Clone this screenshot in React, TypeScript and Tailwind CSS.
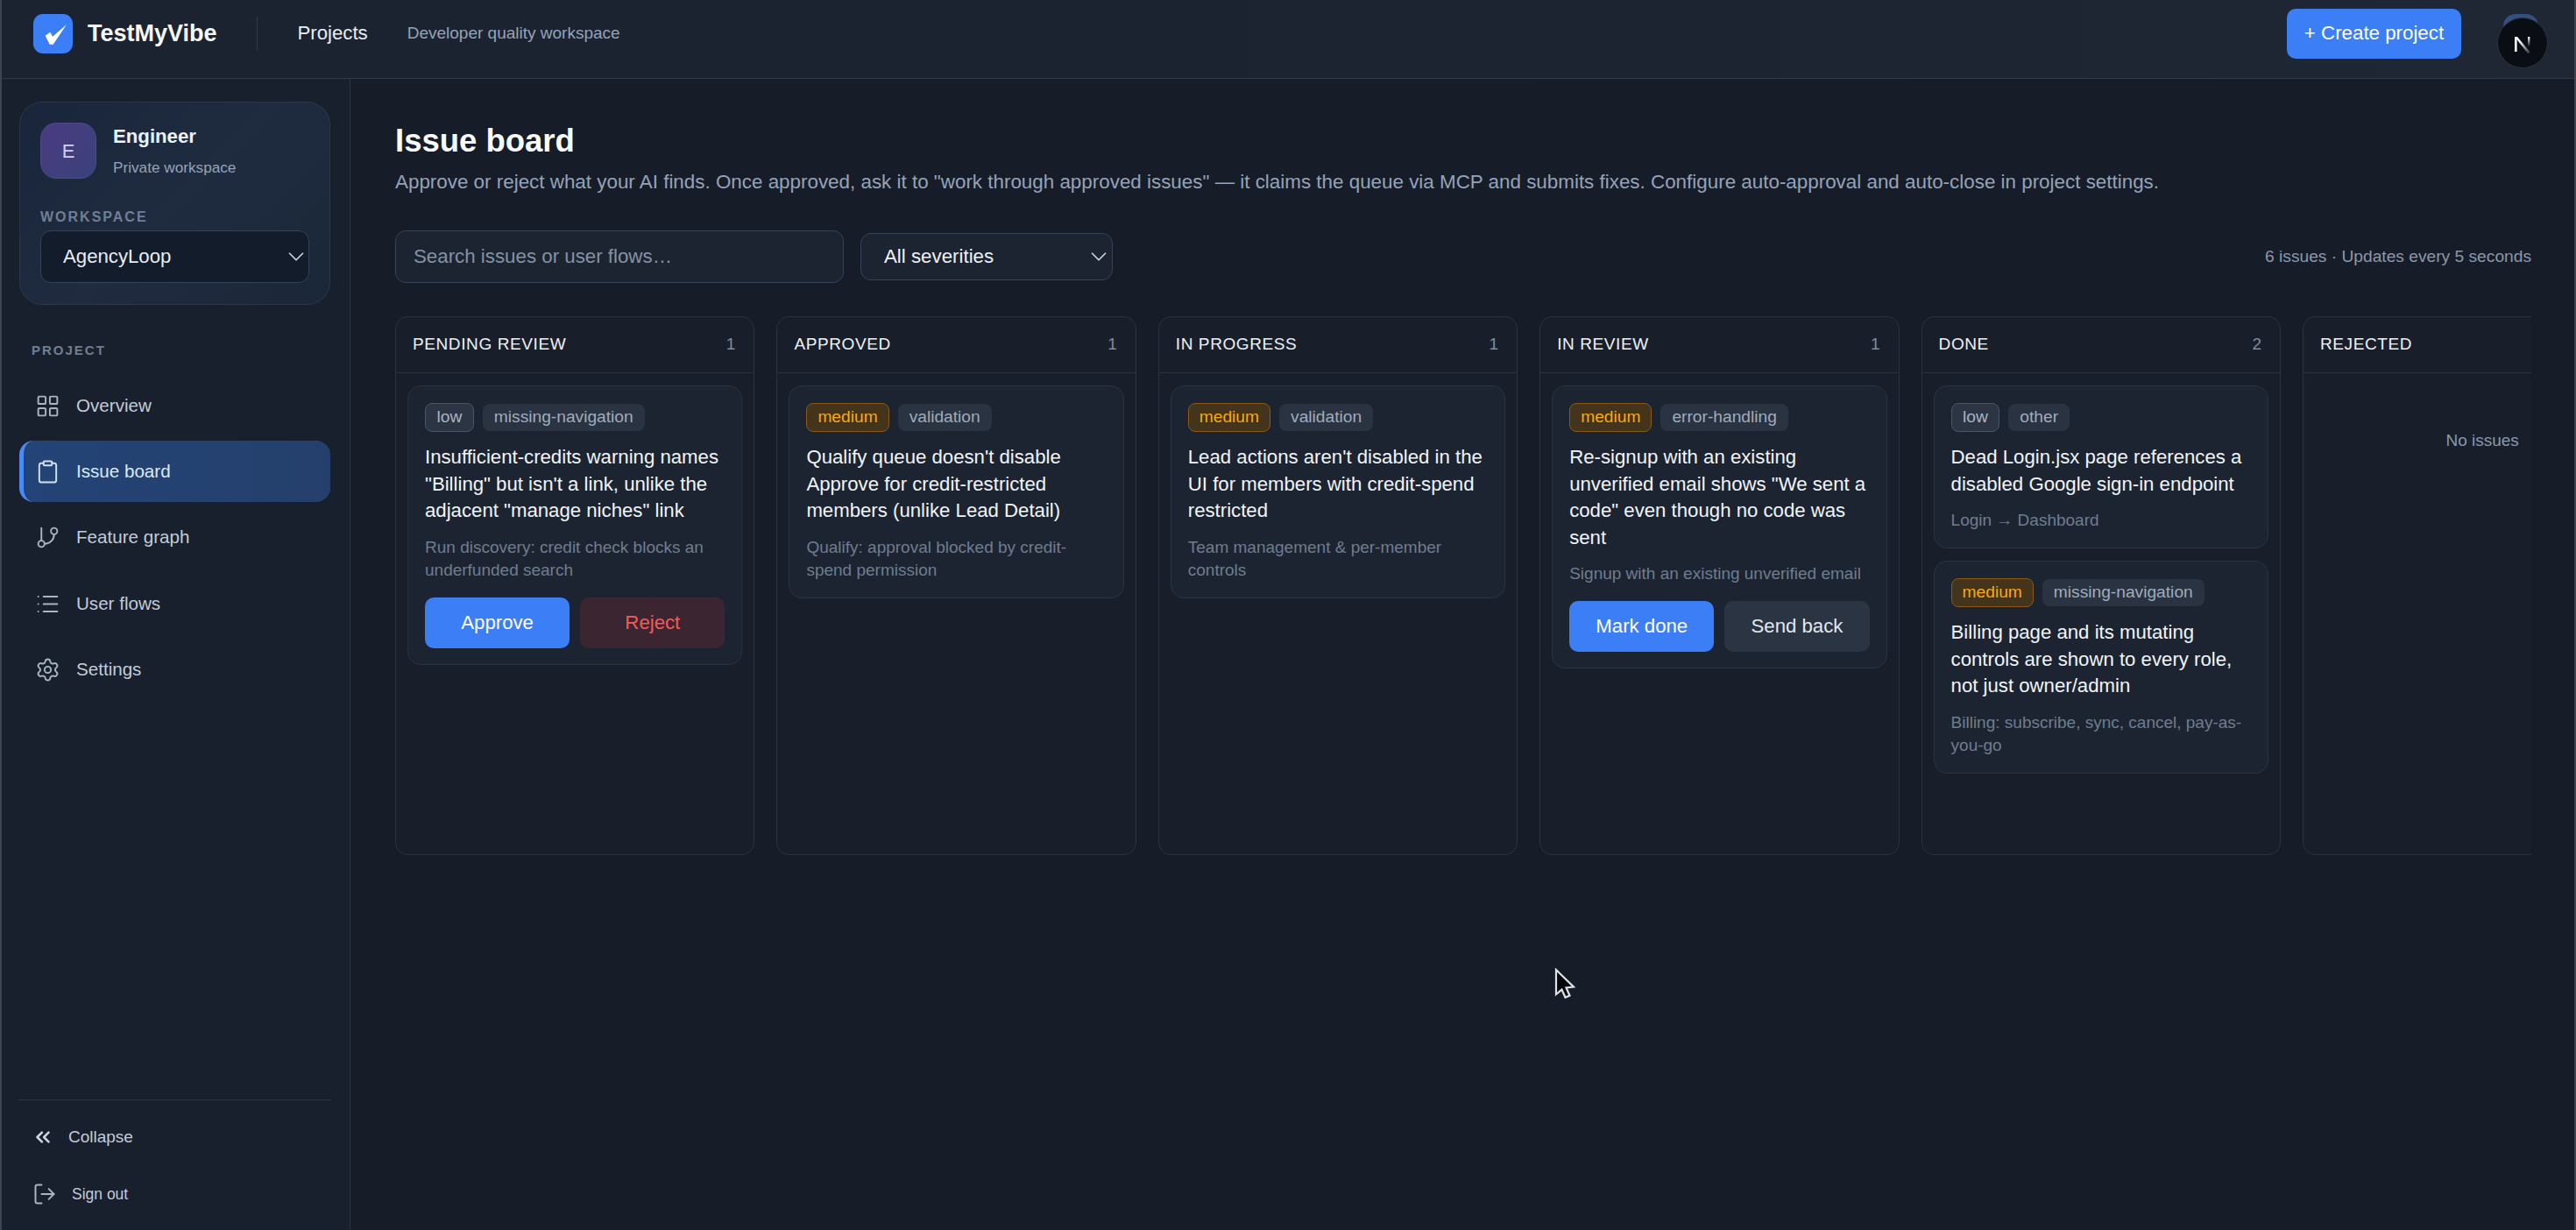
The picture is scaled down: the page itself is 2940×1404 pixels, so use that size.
import { ChevronDown, ChevronsLeft, Clipboard, GitBranch, LayoutGrid, List, LogOut, Settings } from "lucide-react";

type Action = { label: string; style: string };
type Issue = {
  severity: "low" | "medium";
  tag: string;
  title: string;
  flow: string;
  actions?: Action[];
};
type Column = { name: string; issues: Issue[] };

const primaryBtn = "bg-[#3b7ef6] text-white";

const columns: Column[] = [
  {
    name: "Pending review",
    issues: [
      {
        severity: "low",
        tag: "missing-navigation",
        title: 'Insufficient-credits warning names "Billing" but isn\'t a link, unlike the adjacent "manage niches" link',
        flow: "Run discovery: credit check blocks an underfunded search",
        actions: [
          { label: "Approve", style: primaryBtn },
          { label: "Reject", style: "bg-[#3a2530] text-[#f55a5a]" },
        ],
      },
    ],
  },
  {
    name: "Approved",
    issues: [
      {
        severity: "medium",
        tag: "validation",
        title: "Qualify queue doesn't disable Approve for credit-restricted members (unlike Lead Detail)",
        flow: "Qualify: approval blocked by credit-spend permission",
      },
    ],
  },
  {
    name: "In progress",
    issues: [
      {
        severity: "medium",
        tag: "validation",
        title: "Lead actions aren't disabled in the UI for members with credit-spend restricted",
        flow: "Team management & per-member controls",
      },
    ],
  },
  {
    name: "In review",
    issues: [
      {
        severity: "medium",
        tag: "error-handling",
        title: 'Re-signup with an existing unverified email shows "We sent a code" even though no code was sent',
        flow: "Signup with an existing unverified email",
        actions: [
          { label: "Mark done", style: primaryBtn },
          { label: "Send back", style: "bg-[#2a3443] text-[#e2e8f0]" },
        ],
      },
    ],
  },
  {
    name: "Done",
    issues: [
      {
        severity: "low",
        tag: "other",
        title: "Dead Login.jsx page references a disabled Google sign-in endpoint",
        flow: "Login → Dashboard",
      },
      {
        severity: "medium",
        tag: "missing-navigation",
        title: "Billing page and its mutating controls are shown to every role, not just owner/admin",
        flow: "Billing: subscribe, sync, cancel, pay-as-you-go",
      },
    ],
  },
  { name: "Rejected", issues: [] },
];

const navItems = [
  { label: "Overview", icon: LayoutGrid },
  { label: "Issue board", icon: Clipboard, active: true },
  { label: "Feature graph", icon: GitBranch },
  { label: "User flows", icon: List },
  { label: "Settings", icon: Settings },
];

function IssueCard({ issue }: { issue: Issue }) {
  return (
    <div className="rounded-[15px] border border-[#2a3341] bg-[#1c2431] px-[19px] pb-[18px] pt-[19px]">
      <div className="flex h-[33px] items-center gap-[10px]">
        {issue.severity === "low" ? (
          <span className="flex h-[33px] items-center rounded-[8px] border border-[#4a5566] bg-[#2c3544] px-[12.5px] text-[19.2px] text-[#a9b4c3]">
            low
          </span>
        ) : (
          <span className="flex h-[33px] items-center rounded-[8px] border border-[#8a5a14] bg-[#45341c] px-[12px] text-[19.2px] text-[#f8a90f]">
            medium
          </span>
        )}
        <span className="flex h-[31px] items-center rounded-[8px] bg-[#293342] px-[13px] text-[19.2px] text-[#a0acbc]">
          {issue.tag}
        </span>
      </div>
      <p className="mt-[14px] text-[22.2px] leading-[30.5px] text-[#f1f5f9]">{issue.title}</p>
      <p className="mt-[13px] text-[19px] leading-[26px] text-[#6f7d90]">{issue.flow}</p>
      {issue.actions && (
        <div className="mt-[18px] flex gap-[12px]">
          {issue.actions.map((a) => (
            <button key={a.label} className={`h-[58px] flex-1 rounded-[10px] text-[22.2px] ${a.style}`}>
              {a.label}
            </button>
          ))}
        </div>
      )}
    </div>
  );
}

function BoardColumn({ column }: { column: Column }) {
  return (
    <div className="h-[615px] w-[410.4px] shrink-0 rounded-[14px] border border-[#2a3240] bg-[#181f2b]">
      <div className="flex h-[64px] items-center justify-between border-b border-[#2a3240] pl-[19px] pr-[21px]">
        <span className="text-[19px] uppercase tracking-[0.6px] text-[#eef2f7]">{column.name}</span>
        <span className="text-[19px] text-[#7f8c9e]">{column.issues.length}</span>
      </div>
      <div className="flex flex-col gap-[14px] px-[13px] pt-[14px]">
        {column.issues.map((issue) => (
          <IssueCard key={issue.title} issue={issue} />
        ))}
        {column.issues.length === 0 && (
          <p className="pt-[50px] text-center text-[19px] leading-[26px] text-[#8b98aa]">No issues</p>
        )}
      </div>
    </div>
  );
}

export default function App() {
  return (
    <div className="relative flex h-[1404px] w-[2940px] flex-col overflow-hidden border-x-2 border-[#3f4550] bg-[#171d28] font-['Liberation_Sans',Arial,sans-serif]">
      {/* top bar */}
      <header className="flex h-[90px] shrink-0 items-center border-b border-[#333b49] bg-[linear-gradient(90deg,#1c2330,#1c2431_60%,#1f2634)] pb-[13px] pl-[36px] pr-[30px]">
        <div className="flex h-[45px] w-[45px] items-center justify-center rounded-[11px] bg-[#3b7ef6]">
          <svg width="45" height="45" viewBox="0 0 45 45">
            <path d="M13.7 24.7 L19.3 20.7 L22 25.7 L38 12 L22.7 34.7 L18.7 34.7 Z" fill="#fff" />
          </svg>
        </div>
        <span className="ml-[17px] text-[27px] font-bold text-[#f5f7fa]">TestMyVibe</span>
        <div className="ml-[45px] h-[38px] w-px bg-[#333b49]" />
        <span className="ml-[46px] text-[22.2px] text-[#e8edf3]">Projects</span>
        <span className="ml-[45px] text-[19px] text-[#94a3b8]">Developer quality workspace</span>
        <button className="ml-auto h-[57px] w-[199px] rounded-[10px] bg-[#3b7ef6] text-[22.3px] text-white">
          + Create project
        </button>
        <div className="relative ml-[41px] mt-[21px] h-[58px] w-[58px]">
          <div className="absolute -top-[4px] left-[7px] h-[14px] w-[40px] rounded-t-full bg-[#34507f]" />
          <svg className="absolute inset-0" width="58" height="58" viewBox="0 0 58 58">
            <defs>
              <linearGradient id="nfade" x1="0" y1="0" x2="1" y2="1">
                <stop offset="0.3" stopColor="#fff" />
                <stop offset="1" stopColor="#fff" stopOpacity="0.1" />
              </linearGradient>
              <linearGradient id="nstem" x1="0" y1="0" x2="0" y2="1">
                <stop offset="0" stopColor="#fff" />
                <stop offset="0.8" stopColor="#fff" stopOpacity="0" />
              </linearGradient>
            </defs>
            <circle cx="29" cy="29" r="28.5" fill="#0a0d13" stroke="#2d323c" strokeWidth="1" />
            <rect x="20" y="22" width="2.6" height="17" fill="#fff" />
            <path d="M20 22 L23 22 L38 40 L35 41 Z" fill="url(#nfade)" />
            <rect x="35" y="22" width="2.4" height="14" fill="url(#nstem)" />
          </svg>
        </div>
      </header>

      <div className="flex min-h-0 flex-1">
        {/* sidebar */}
        <aside className="flex w-[398px] shrink-0 flex-col border-r border-[#2b3442] bg-[#17202c] pl-[20px] pr-[22px] pt-[26px]">
          <div className="h-[232px] rounded-[26px] border border-[#2b3747] bg-[linear-gradient(135deg,#19253a,#1f2c40_50%,#1a2738)] px-[23px] pt-[23px]">
            <div className="flex gap-[19px]">
              <div className="flex h-[64px] w-[64px] items-center justify-center rounded-[18px] border border-[#4b4a8a] bg-[linear-gradient(135deg,#4b3b82,#3a4279)] text-[22px] text-[#d8ccfb]">
                E
              </div>
              <div>
                <div className="pt-[1px] text-[22.2px] font-bold leading-[30px] text-[#eef2f7]">Engineer</div>
                <div className="mt-[8px] text-[17.2px] leading-[24px] text-[#94a3b8]">Private workspace</div>
              </div>
            </div>
            <div className="mt-[33px] text-[16px] font-bold leading-[22px] tracking-[2px] text-[#6f7f94]">WORKSPACE</div>
            <div className="mt-[4px] flex h-[60px] items-center justify-between rounded-[12px] border border-[#35425a] bg-[#121c2a] pl-[25px] text-[22.2px] text-[#e8edf3]">
              AgencyLoop
              <ChevronDown size={30} strokeWidth={1.4} className="-mr-[1px] text-[#cbd5e1]" />
            </div>
          </div>

          <div className="ml-[14px] mt-[41px] text-[15px] font-bold leading-[22px] tracking-[2px] text-[#6f7f94]">PROJECT</div>
          <nav className="mt-[17px] flex flex-col gap-[5.4px]">
            {navItems.map(({ label, icon: Icon, active }) => (
              <a
                key={label}
                className={
                  active
                    ? "flex h-[70px] items-center gap-[18px] rounded-[16px] border-l-[5px] border-[#4a8af4] bg-[linear-gradient(90deg,#234477,#243f6b)] pl-[13px] text-[20.6px] text-[#dbeafe]"
                    : "flex h-[70px] items-center gap-[18px] rounded-[16px] pl-[18px] text-[20.6px] text-[#c3ccd8]"
                }
              >
                <Icon size={29} strokeWidth={1.6} className={active ? "text-[#cfe0fb]" : "text-[#aab4c2]"} />
                {label}
              </a>
            ))}
          </nav>

          <div className="-mx-px mt-auto flex flex-col gap-[15px] border-t border-[#2c3544] pb-[16px] pt-[17px] text-[#c3ccd8]">
            <a className="flex h-[50px] items-center gap-[16px] pl-[15px] text-[19px]">
              <ChevronsLeft size={26} strokeWidth={2.4} className="text-[#cbd5e1]" />
              {"Collapse"}
            </a>
            <a className="flex h-[50px] items-center gap-[17px] pl-[16px] text-[17.5px]">
              <LogOut size={28} strokeWidth={1.7} className="text-[#aab4c2]" />
              {"Sign out"}
            </a>
          </div>
        </aside>

        {/* main */}
        <main className="min-w-0 flex-1 pl-[51px] pr-[49px] pt-[49px]">
          <h1 className="text-[36.5px] font-bold leading-[44px] text-[#f8fafc]">Issue board</h1>
          <p className="mt-[9px] text-[22.4px] leading-[32px] text-[#94a3b8]">
            {'Approve or reject what your AI finds. Once approved, ask it to "work through approved issues" — it claims the queue via MCP and submits fixes. Configure auto-approval and auto-close in project settings.'}
          </p>
          <div className="mt-[39px] flex h-[60px] items-center">
            <input
              placeholder="Search issues or user flows…"
              className="h-[60px] w-[512px] rounded-[12px] border border-[#35425a] bg-[#1c2431] px-[20px] text-[22.3px] text-[#e2e8f0] outline-none placeholder:text-[#8492a6]"
            />
            <div className="ml-[19px] flex h-[54px] w-[288px] items-center justify-between rounded-[12px] border border-[#35425a] bg-[#1c2431] pl-[26px] text-[22.3px] text-[#eef2f7]">
              All severities
              <ChevronDown size={30} strokeWidth={1.4} className="text-[#cbd5e1]" />
            </div>
            <span className="ml-auto text-[19.2px] text-[#8b98aa]">6 issues · Updates every 5 seconds</span>
          </div>
          <div className="mt-[38px] flex gap-[25px] overflow-hidden">
            {columns.map((column) => (
              <BoardColumn key={column.name} column={column} />
            ))}
          </div>
        </main>
      </div>

      {/* mouse pointer from the recording */}
      <svg className="absolute left-[1771px] top-[1105px]" width="26" height="36" viewBox="0 0 26 36">
        <path d="M3 2 L3 30 L9.5 24.5 L13.5 33.5 L18.5 31.5 L14.5 22.5 L23 21.5 Z" fill="#05070a" stroke="#dfe2e6" strokeWidth="2.2" />
      </svg>
    </div>
  );
}
